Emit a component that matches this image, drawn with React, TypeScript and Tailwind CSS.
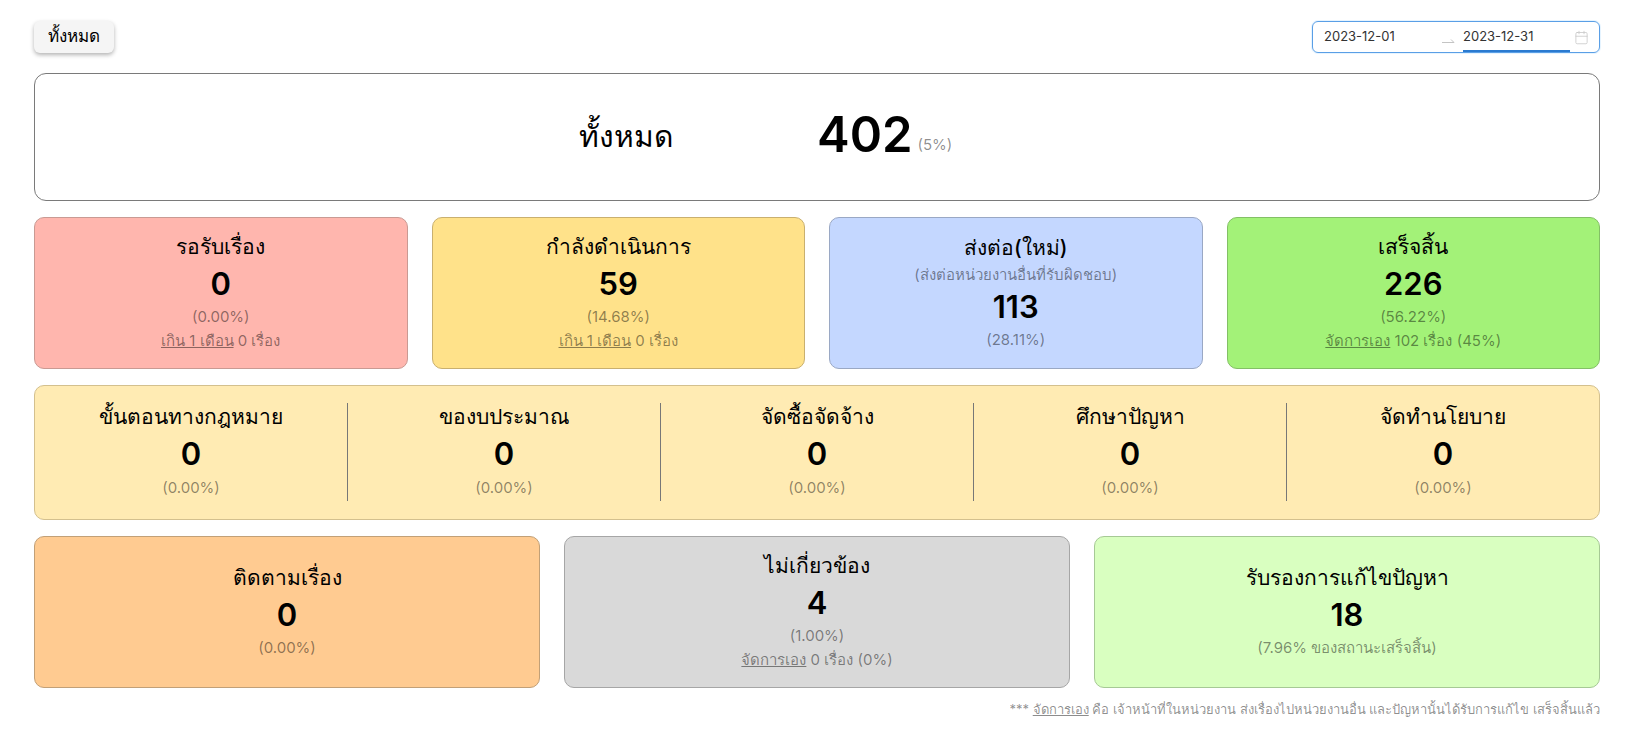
import { Calendar } from "lucide-react";

const font = "font-['Inter','Noto_Sans','Noto_Sans_CJK_SC',sans-serif]";

function Card({
  title,
  sub,
  value,
  pct,
  link,
  rest,
  className,
}: {
  title: string;
  sub?: string;
  value: string;
  pct: string;
  link?: string;
  rest?: string;
  className: string;
}) {
  return (
    <div
      className={`flex h-[152px] flex-col items-center justify-center rounded-[10px] border pb-[3px] text-center ${className}`}
    >
      <div className="text-[21px] leading-[32px] font-medium text-black">{title}</div>
      {sub && <div className="text-[15px] leading-[22px] text-black/45">{sub}</div>}
      <div className="text-[31px] leading-[42px] font-semibold text-black">{value}</div>
      <div className="text-[15px] leading-[24px] text-black/45">{pct}</div>
      {link && (
        <div className="text-[15px] leading-[24px] text-black/45">
          <u>{link}</u> {rest}
        </div>
      )}
    </div>
  );
}

const legalItems = [
  ["ขั้นตอนทางกฎหมาย", "0", "(0.00%)"],
  ["ของบประมาณ", "0", "(0.00%)"],
  ["จัดซื้อจัดจ้าง", "0", "(0.00%)"],
  ["ศึกษาปัญหา", "0", "(0.00%)"],
  ["จัดทำนโยบาย", "0", "(0.00%)"],
];

export default function App() {
  return (
    <div className={`${font} flex h-[730px] flex-col bg-white pt-[21px] pr-[28px] pl-[34px]`}>
      <div className="flex items-center justify-between">
        <button className="h-[32px] w-[80px] rounded-[6px] bg-[#f5f5f5] text-[17px] font-medium text-black shadow-[0_2px_4px_rgba(0,0,0,0.3)]">
          ทั้งหมด
        </button>
        <div className="relative flex h-[32px] w-[288px] items-center rounded-[6px] border border-[#5a9fe6] pr-[10px] pl-[11px] text-[13px] text-[#333] shadow-[0_0_0_1px_rgba(5,145,255,0.1)]">
          <span className="w-[117px]">2023-12-01</span>
          <svg width="20" height="10" viewBox="0 0 20 10" className="mt-[6px] text-[#c4c4c4]" fill="none" stroke="currentColor">
            <path d="M1 7.5H13L10 4.5" />
          </svg>
          <span className="w-[107px] pl-[2px]">2023-12-31</span>
          <Calendar size={15} strokeWidth={1.2} className="ml-auto text-[#c4c4c4]" />
          <span className="absolute bottom-0 left-[150px] h-[2px] w-[107px] bg-[#2a7ad0]" />
        </div>
      </div>

      <div className="mt-[20px] flex h-[128px] items-center rounded-[12px] border border-[#7a7a7a] pl-[400px]">
        <div className="mt-[-2px] w-[382px] text-center text-[30px] font-medium text-black">ทั้งหมด</div>
        <div className="mt-[-6px] text-[49px] leading-none font-semibold text-black">402</div>
        <div className="mt-[16px] ml-[5px] text-[15px] text-black/45">(5%)</div>
      </div>

      <div className="mt-[16px] grid grid-cols-4 gap-[24px]">
        <Card
          title="รอรับเรื่อง"
          value="0"
          pct="(0.00%)"
          link="เกิน 1 เดือน"
          rest="0 เรื่อง"
          className="border-[#c99a93] bg-[#ffb6ae]"
        />
        <Card
          title="กำลังดำเนินการ"
          value="59"
          pct="(14.68%)"
          link="เกิน 1 เดือน"
          rest="0 เรื่อง"
          className="border-[#c9b06f] bg-[#ffe28a]"
        />
        <Card
          title="ส่งต่อ(ใหม่)"
          sub="(ส่งต่อหน่วยงานอื่นที่รับผิดชอบ)"
          value="113"
          pct="(28.11%)"
          className="border-[#9aa8c4] bg-[#c4d7ff]"
        />
        <Card
          title="เสร็จสิ้น"
          value="226"
          pct="(56.22%)"
          link="จัดการเอง"
          rest="102 เรื่อง (45%)"
          className="border-[#83c066] bg-[#a3f278]"
        />
      </div>

      <div className="mt-[16px] flex h-[135px] items-center rounded-[10px] border border-[#d3c08e] bg-[#ffebb3] pb-[2px]">
        {legalItems.map(([title, value, pct], i) => (
          <div
            key={title}
            className={`flex h-[98px] flex-1 flex-col items-center justify-center pb-[2px] ${i > 0 ? "border-l border-[#777]" : ""}`}
          >
            <div className="text-[21px] leading-[30px] font-medium text-black">{title}</div>
            <div className="text-[31px] leading-[44px] font-semibold text-black">{value}</div>
            <div className="text-[15px] leading-[24px] text-black/45">{pct}</div>
          </div>
        ))}
      </div>

      <div className="mt-[16px] grid grid-cols-3 gap-[24px]">
        <Card
          title="ติดตามเรื่อง"
          value="0"
          pct="(0.00%)"
          className="border-[#c2a077] bg-[#ffcb91]"
        />
        <Card
          title="ไม่เกี่ยวข้อง"
          value="4"
          pct="(1.00%)"
          link="จัดการเอง"
          rest="0 เรื่อง (0%)"
          className="border-[#a6a6a6] bg-[#d9d9d9]"
        />
        <Card
          title="รับรองการแก้ไขปัญหา"
          value="18"
          pct="(7.96% ของสถานะเสร็จสิ้น)"
          className="border-[#a6c995] bg-[#d9ffc0]"
        />
      </div>

      <div className="mt-[11px] text-right text-[13px] leading-[20px] text-black/45">
        *** <u>จัดการเอง</u> คือ เจ้าหน้าที่ในหน่วยงาน ส่งเรื่องไปหน่วยงานอื่น และปัญหานั้นได้รับการแก้ไข เสร็จสิ้นแล้ว
      </div>
    </div>
  );
}
